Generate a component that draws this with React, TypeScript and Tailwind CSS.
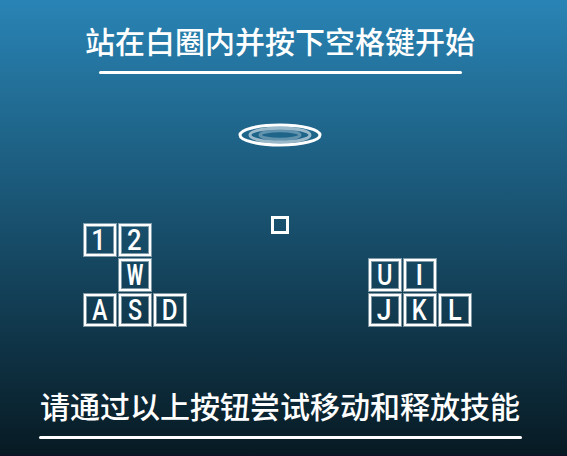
const letterStyles: Record<string, string> = {
  '1': 'scale-x-[0.86] -translate-x-px',
  '2': 'scale-x-[0.87]',
  W: 'scale-x-[0.64] font-bold',
  A: 'scale-x-[0.77]',
  S: 'scale-x-[0.79]',
  D: 'scale-x-[0.82]',
  U: 'scale-x-[0.8]',
  I: 'scale-x-90',
  J: 'scale-x-[0.9]',
  K: 'scale-x-[0.8]',
  L: 'scale-x-[0.86]',
};

function Key({ label }: { label: string }) {
  return (
    <div className="flex size-8 items-center justify-center border-2 border-white pt-[2px] pr-px font-['Roboto',sans-serif] text-[29.5px] leading-none font-medium text-white shadow-[0_0_0_1px_rgba(255,255,255,0.45),inset_0_0_0_1px_rgba(255,255,255,0.45)]">
      <span className={letterStyles[label]}>{label}</span>
    </div>
  );
}

function KeyGroup({ rows }: { rows: string[] }) {
  return (
    <div className="flex flex-col gap-[3px]">
      {rows.map((row) => (
        <div key={row} className="flex gap-[3px]">
          {row.split('').map((label, i) =>
            label === ' ' ? <div key={i} className="size-8" /> : <Key key={i} label={label} />,
          )}
        </div>
      ))}
    </div>
  );
}

export default function App() {
  return (
    <main className="flex h-[456px] w-[567px] flex-col overflow-hidden border-b border-[#101126] bg-linear-to-b/srgb from-[#2984b5] to-[#071a23] font-['Noto_Sans_CJK_SC',sans-serif] font-medium text-white">
      <header className="flex w-[560px] flex-col items-center pt-[25px]">
        <h1 className="h-[30px] text-[30px] leading-[30px] font-medium whitespace-nowrap">站在白圈内并按下空格键开始</h1>
        <div className="mt-[16px] h-[3px] w-[363px] rounded-full bg-white" />
      </header>
      <section className="flex w-[560px] flex-col items-center pt-[48px]">
        <svg className="h-[26px] w-[86px]" viewBox="0 0 86 26" fill="none" stroke="white" strokeWidth="3">
          <ellipse cx="43" cy="13" rx="40" ry="10" />
          <ellipse cx="43" cy="13" rx="30" ry="7" opacity=".55" />
          <ellipse cx="43" cy="13" rx="20" ry="4.3" opacity=".3" />
        </svg>
      </section>
      <section className="flex h-[178px] items-end pl-[84px]">
        <KeyGroup rows={['12', ' W', 'ASD']} />
        <div className="mb-[92px] ml-[85px] size-[18px] border-3 border-white" />
        <div className="ml-[80px]">
          <KeyGroup rows={['UI', 'JKL']} />
        </div>
      </section>
      <footer className="flex w-[560px] flex-col items-center pt-[64px]">
        <p className="h-[30px] text-[30px] leading-[30px] whitespace-nowrap">请通过以上按钮尝试移动和释放技能</p>
        <div className="mt-[16px] h-[3px] w-[483px] rounded-full bg-white" />
      </footer>
    </main>
  );
}
